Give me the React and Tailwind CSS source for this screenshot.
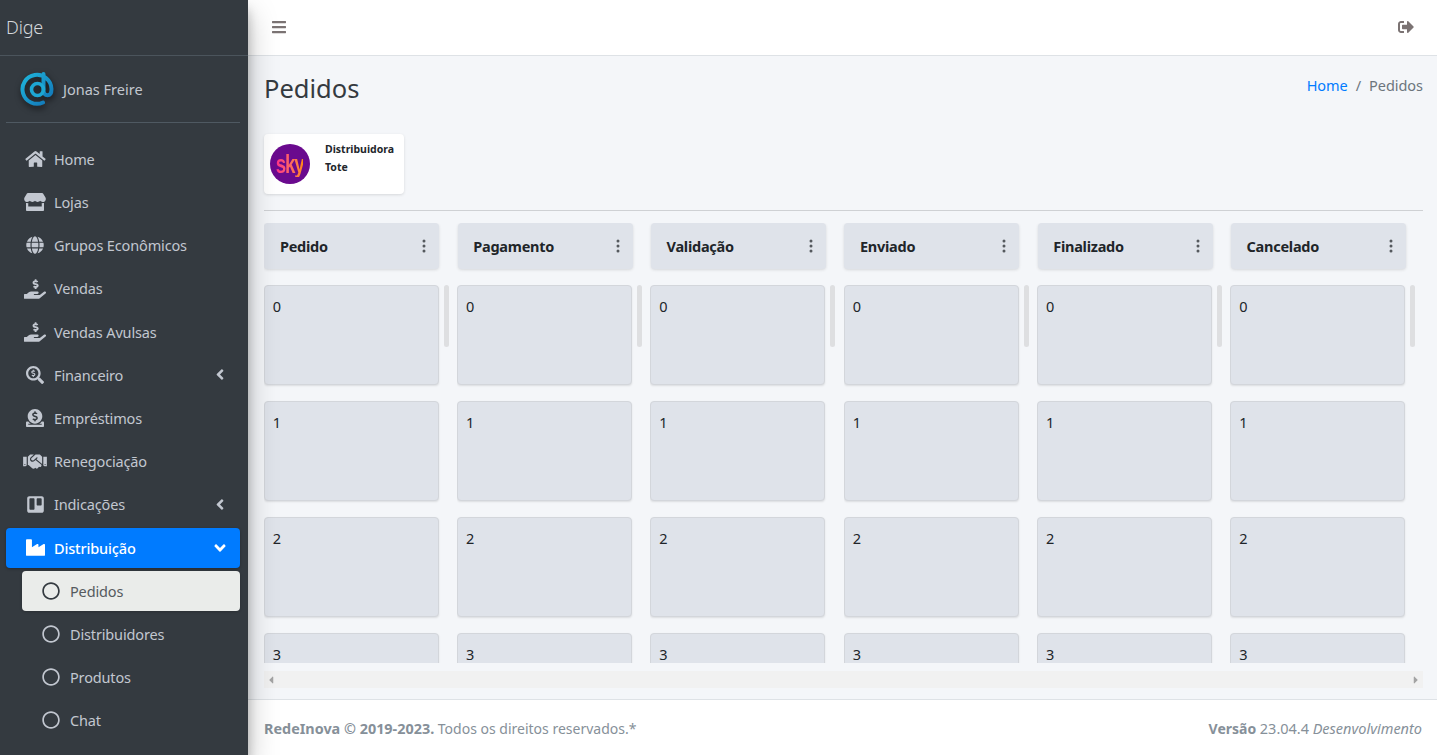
import {
  FaHome, FaStore, FaGlobe, FaHandHoldingUsd, FaSearchDollar, FaDonate, FaHandshake,
  FaTrello, FaIndustry, FaAngleLeft, FaAngleDown, FaRegCircle, FaBars, FaSignOutAlt,
  FaCaretLeft, FaCaretRight,
} from "react-icons/fa";
import { BsThreeDotsVertical } from "react-icons/bs";

const menu = [
  { label: "Home", icon: FaHome, size: "h-[18px] w-[21px]" },
  { label: "Lojas", icon: FaStore, size: "h-[18px] w-[22px]" },
  { label: "Grupos Econômicos", icon: FaGlobe, size: "h-[18px] w-[18px]" },
  { label: "Vendas", icon: FaHandHoldingUsd, size: "h-[20px] w-[22px]" },
  { label: "Vendas Avulsas", icon: FaHandHoldingUsd, size: "h-[20px] w-[22px]" },
  { label: "Financeiro", icon: FaSearchDollar, size: "h-[18px] w-[18px]", arrow: true },
  { label: "Empréstimos", icon: FaDonate, size: "h-[18px] w-[18px]" },
  { label: "Renegociação", icon: FaHandshake, size: "h-[19px] w-[24px]" },
  { label: "Indicações", icon: FaTrello, size: "h-[19px] w-[17px]", arrow: true },
];

const submenu = ["Pedidos", "Distribuidores", "Produtos", "Chat"];
const columns = ["Pedido", "Pagamento", "Validação", "Enviado", "Finalizado", "Cancelado"];

function Logo() {
  return (
    <svg viewBox="0 0 34 34" className="h-[34px] w-[34px] shrink-0 drop-shadow-[1px_3px_3px_rgba(0,0,0,0.6)]">
      <defs>
        <linearGradient id="logoGrad" x1="0" y1="0" x2="1" y2="1">
          <stop offset="0" stopColor="#1fb6dc" />
          <stop offset="1" stopColor="#1273b5" />
        </linearGradient>
      </defs>
      <path d="M23 30.5A14.5 14.5 0 1 1 31.5 17c0 4-1.6 6.3-4 6.3s-4-2-4-5V2" fill="none" stroke="url(#logoGrad)" strokeWidth="4" strokeLinecap="round" />
      <circle cx="17.5" cy="17.5" r="6" fill="none" stroke="#1da7d3" strokeWidth="3.6" />
    </svg>
  );
}

function NavItem({ item }) {
  const Icon = item.icon;
  return (
    <a className="mb-[3.2px] flex h-10 items-center rounded pl-4 text-[#c2c7d0]">
      <span className="mr-[6px] flex w-[26px] shrink-0 justify-center">
        <Icon className={item.size} />
      </span>
      <span className="pt-[1.6px]">{item.label}</span>
      {item.arrow && (
        <span className="ml-auto mr-3 flex w-4 justify-center">
          <FaAngleLeft className="h-[17px] w-[10px]" />
        </span>
      )}
    </a>
  );
}

function Sidebar() {
  return (
    <aside className="relative z-10 flex h-full w-[248px] shrink-0 flex-col bg-[#343a40] tracking-[-0.15px] shadow-[0_14px_28px_rgba(0,0,0,0.25),0_10px_10px_rgba(0,0,0,0.22)]">
      <div className="flex h-14 shrink-0 items-center border-b border-[#4b545c] pl-[6px] text-[18px] font-light text-[#d5d8dc]">
        Dige
      </div>
      <div className="ml-[6px] mr-2 flex h-[67px] shrink-0 items-center border-b border-[#4f5962] pl-[14px] text-[#c2c7d0]">
        <Logo />
        <span className="ml-[9px] pt-[2px] tracking-normal">Jonas Freire</span>
      </div>
      <nav className="ml-[6px] mr-2 mt-4">
        {menu.map((item) => (
          <NavItem key={item.label} item={item} />
        ))}
        <a className="mb-[3.2px] flex h-10 items-center rounded bg-[#007bff] pl-4 text-white shadow-[0_1px_3px_rgba(0,0,0,0.3)]">
          <span className="mr-[6px] flex w-[26px] shrink-0 justify-center">
            <FaIndustry className="h-[19px] w-[19px]" />
          </span>
          <span className="pt-[1.6px] font-medium">Distribuição</span>
          <span className="ml-auto mr-3 flex w-4 justify-center">
            <FaAngleDown className="h-[18px] w-[12px]" />
          </span>
        </a>
        <div className="ml-4">
          {submenu.map((label, i) => (
            <a
              key={label}
              className={`mb-[3.2px] flex h-10 items-center rounded pl-4 ${
                i === 0 ? "bg-[#eaecea] text-[#555a5e] shadow-[0_1px_3px_rgba(0,0,0,0.2)]" : "text-[#c2c7d0]"
              }`}
            >
              <span className={`mr-[6px] flex w-[26px] shrink-0 justify-center ${i === 0 ? "text-[#343a40]" : ""}`}>
                <FaRegCircle className="h-[18px] w-[18px]" />
              </span>
              <span className="pt-[1.6px]">{label}</span>
            </a>
          ))}
        </div>
      </nav>
    </aside>
  );
}

function BoardColumn({ name }) {
  return (
    <div className="flex w-[193.33px] shrink-0 flex-col">
      <div className="ml-[0.4px] flex h-[46px] w-[175px] shrink-0 items-center justify-between rounded bg-[#dfe3ea] pl-[15.5px] pr-[7px] shadow-[0_1px_3px_rgba(0,0,0,0.12)]">
        <span className="pt-[2px] font-bold tracking-[-0.25px] text-[#212529]">{name}</span>
        <BsThreeDotsVertical className="h-4 w-4 text-[#55595e]" />
      </div>
      <div className="relative -ml-[0.3px] mt-4 min-h-0 flex-1 overflow-hidden">
        {[0, 1, 2, 3].map((n) => (
          <div
            key={n}
            className="mb-4 h-[100px] w-[175px] rounded border border-[#d3d6db] bg-[#dfe3ea] px-2 py-2 leading-6 text-[#212529] shadow-[0_1px_2px_rgba(0,0,0,0.1)]"
          >
            {n}
          </div>
        ))}
        <div className="absolute left-[180px] top-0 h-[62px] w-[5px] rounded bg-[#dedfe1]" />
      </div>
    </div>
  );
}

export default function App() {
  return (
    <div className="flex h-[755px] w-full overflow-hidden bg-[#f4f6f9] font-['Noto_Sans',sans-serif] text-[14.5px] text-[#212529]">
      <Sidebar />
      <div className="flex min-w-0 flex-1 flex-col">
        <header className="flex h-14 shrink-0 items-center justify-between border-b border-[#dee2e6] bg-white pb-[2px] pl-[24px] pr-[23px] text-[#7b7373]">
          <FaBars className="h-4 w-[14px]" />
          <FaSignOutAlt className="h-4 w-4" />
        </header>

        <main className="flex min-h-0 flex-1 flex-col pl-4 pr-[14px]">
          <div className="flex h-[66px] shrink-0 items-start justify-between pt-[14px]">
            <h1 className="text-[25.5px] leading-9 text-[#343a40]">Pedidos</h1>
            <div className="flex pt-[3px] leading-6 tracking-[-0.05px] text-[#6c757d]">
              <a className="text-[#007bff]">Home</a>
              <span className="px-2">/</span>
              <span>Pedidos</span>
            </div>
          </div>

          <div className="mt-3 flex h-[60px] w-[140px] shrink-0 items-center rounded bg-white pl-[6px] shadow-[0_1px_3px_rgba(0,0,0,0.12)]">
            <div className="flex h-10 w-10 shrink-0 items-center justify-center rounded-full bg-[#6a0a8e]">
              <span className="scale-x-75 bg-linear-to-r from-[#ff2a8a] to-[#ff8a00] bg-clip-text font-['Liberation_Sans',sans-serif] text-[25px] font-bold leading-none tracking-[-1.5px] text-transparent">
                sky
              </span>
            </div>
            <div className="mb-3 ml-[15px] text-[10.5px] font-bold leading-[18px] text-[#22262b]">
              <div>Distribuidora</div>
              <div>Tote</div>
            </div>
          </div>

          <hr className="mt-4 shrink-0 border-[#cfd1d4]" />

          <div className="mt-3 flex min-h-0 flex-1 overflow-hidden">
            {columns.map((name) => (
              <BoardColumn key={name} name={name} />
            ))}
          </div>

          <div className="mb-[11px] mt-2 flex h-[17px] shrink-0 items-center justify-between bg-[#f1f1f1] px-[3px] text-[#a3a3a3]">
            <FaCaretLeft className="h-[12px] w-[8px]" />
            <FaCaretRight className="h-[12px] w-[8px]" />
          </div>
        </main>

        <footer className="flex h-14 shrink-0 items-center justify-between border-t border-[#dee2e6] bg-white pl-4 pr-[15px] pt-[2px] text-[14px] text-[#869099]">
          <div>
            <b className="text-[14.4px]">RedeInova © 2019-2023.</b> Todos os direitos reservados.*
          </div>
          <div>
            <b>Versão</b> <span className="text-[14.5px]">23.04.4</span> <i className="text-[14.5px]">Desenvolvimento</i>
          </div>
        </footer>
      </div>
    </div>
  );
}
